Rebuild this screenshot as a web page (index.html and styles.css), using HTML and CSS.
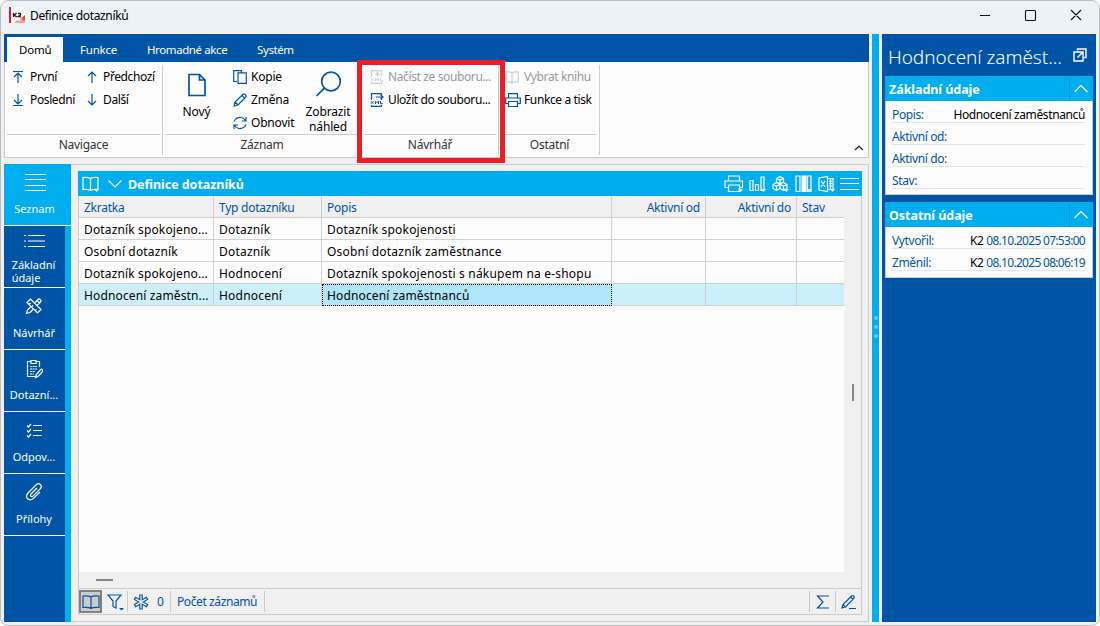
FILE: index.html
```html
<!DOCTYPE html>
<html lang="cs">
<head>
    <meta charset="UTF-8">
    <title>Definice dotazníků</title>
    <link rel="stylesheet" href="styles.css">
</head>
<body>
<div class="window">

    <header class="titlebar">
        <svg class="logo" width="16" height="16" viewBox="0 0 16 16">
            <rect width="16" height="16" fill="#fbfbfb"/>
            <path d="M16 9v7H5l3-3 3 1 1-4z" fill="#f3a39c"/>
            <path d="M16 8l-3 3 1 3 2-1z" fill="#e8493f"/>
            <rect width="2" height="16" fill="#d81e2c"/>
            <path d="M4.500 6v4M7.500 6L5.500 8l2 2M9 6.500h2.500V8L9 9.500h3" stroke="#222" stroke-width="1.300" fill="none"/>
        </svg>
        <span class="app-title">Definice dotazníků</span>
        <svg class="win-buttons" width="104" height="12" viewBox="0 0 104 12">
            <path d="M0 6.500h10M46.500 1.500h8q1 0 1 1v8q0 1-1 1h-8q-1 0-1-1v-8q0-1 1-1zM91 1l10 10M101 1L91 11" fill="none" stroke="#111" stroke-width="1.100"/>
        </svg>
    </header>

    <div class="workspace">
        <div class="left">
            <nav class="tabs">
                <span class="tab active">Domů</span>
                <span class="tab tab-funkce">Funkce</span>
                <span class="tab tab-hromadne">Hromadné akce</span>
                <span class="tab tab-system">Systém</span>
            </nav>

            <div class="ribbon">
                <section class="group navigace">
                    <div class="tools">
                        <div class="stack">
                            <span class="tool"><svg class="ico" viewBox="0 0 14 14"><path d="M1 1.500h10M6 13V3M2 7l4-4 4 4"/></svg>První</span>
                            <span class="tool"><svg class="ico" viewBox="0 0 14 14"><path d="M1 12.500h10M6 1v10M2 7l4 4 4-4"/></svg>Poslední</span>
                        </div>
                        <div class="stack">
                            <span class="tool"><svg class="ico" viewBox="0 0 14 14"><path d="M7 13V2M3 6l4-4 4 4"/></svg>Předchozí</span>
                            <span class="tool"><svg class="ico" viewBox="0 0 14 14"><path d="M7 1v11M3 8l4 4 4-4"/></svg>Další</span>
                        </div>
                    </div>
                    <div class="group-name">Navigace</div>
                </section>

                <section class="group zaznam">
                    <div class="tools">
                        <span class="big-tool novy">
                            <svg width="18" height="24" viewBox="0 0 18 24"><path d="M1 1.500h10.500L17 7v15.500H1zM11.500 1.500V7H17" stroke-width="1.700"/></svg>
                            Nový
                        </span>
                        <div class="stack">
                            <span class="tool"><svg class="ico" viewBox="0 0 14 14"><path d="M4 11.500H.7V.7h7.800V3M5 2.900h8.300v10.500H5z"/></svg>Kopie</span>
                            <span class="tool"><svg class="ico" viewBox="0 0 14 14"><path d="M1 13l1-4L10 1.200q1-.8 2 .2l.6.6q1 1 .2 2L5 12zM2 9l3 3M9 2.500l2.700 2.700"/></svg>Změna</span>
                            <span class="tool"><svg class="ico" viewBox="0 0 14 14"><path d="M1 5.500Q3.500.9 8 1.500q2.500.3 4.500 3M13 1v4H9M13 8.500q-2.500 4.600-7 4Q3.500 12.200 1.500 9.500M1 13V9h4"/></svg>Obnovit</span>
                        </div>
                        <span class="big-tool nahled">
                            <svg width="28" height="28" viewBox="0 0 28 28"><circle cx="17" cy="11.500" r="9.300" stroke-width="1.700"/><path d="M10.300 18.200L2.500 26" stroke-width="1.700"/></svg>
                            <span>Zobrazit<br>náhled</span>
                        </span>
                    </div>
                    <div class="group-name">Záznam</div>
                </section>

                <section class="group navrhar">
                    <div class="tools">
                        <div class="stack">
                            <span class="tool disabled"><svg class="ico" viewBox="0 0 14 14"><path d="M1.500 7V.7h10v1.800M11.500 5.500V7M13 4H6M8.500 1.800L6 4l2.500 2.200M1.500 12v1.300h10V12"/><path d="M1 8.200l2.500 2.600M3.500 8.200L1 10.800M5.500 11V8.200L7 9.700l1.500-1.500V11M10.500 8v2.700H13" stroke-width="1"/></svg>Načíst ze souboru...</span>
                            <span class="tool"><svg class="ico" viewBox="0 0 14 14"><path d="M1.500 7V.7h10v1.300M11.500 6v1M6 4h7M10.500 1.800L13 4l-2.500 2.200M1.500 12v1.300h10V12"/><path d="M1 8.200l2.500 2.600M3.500 8.200L1 10.800M5.500 11V8.200L7 9.700l1.500-1.500V11M10.500 8v2.700H13" stroke-width="1"/></svg>Uložít do souboru...</span>
                        </div>
                    </div>
                    <div class="group-name">Návrhář</div>
                    <div class="highlight"></div>
                </section>

                <section class="group ostatni">
                    <div class="tools">
                        <div class="stack">
                            <span class="tool disabled"><svg class="ico" viewBox="0 0 14 14"><path d="M7 3Q5 1.500.7 2v10Q5 11.500 7 13q2-1.500 6.300-1V2Q9 1.500 7 3zv10"/></svg>Vybrat knihu</span>
                            <span class="tool"><svg class="ico print" viewBox="0 0 16 14"><path d="M3.500 5V.7h9V5M3.500 10.500H.7V5h14.600v5.500h-2.800M3.500 8.500h9v5h-9z"/></svg>Funkce a tisk</span>
                        </div>
                    </div>
                    <div class="group-name">Ostatní</div>
                </section>
                <svg class="collapse" width="10" height="6" viewBox="0 0 10 6"><path d="M1 5l4-4 4 4"/></svg>
            </div>

            <div class="content">
                <aside class="sidebar">
                    <a class="side-item active"><svg width="22" height="19" viewBox="0 0 22 19"><path d="M1 1.500h21M1 6.500h21M1 12.500h21M1 17.500h21"/></svg>Seznam</a>
                    <a class="side-item two-line"><svg width="22" height="14" viewBox="0 0 22 14"><path d="M5 1.500h17M5 7h17M5 12.500h17M1 1.500h2M1 7h2M1 12.500h2"/></svg><span>Základní<br>údaje</span></a>
                    <a class="side-item"><svg width="18" height="18" viewBox="0 0 18 18"><path d="M2 5.500L5.500 2 16 12.500 12.500 16zM4 7.500l1.500-1.500M6.500 10L8 8.500M10 14l1.500-1.500"/><path d="M10 5.500L13 2.500q1-1 2 0l.5.500q1 1 0 2L12 8.500M8 12.500L5 15.500l-3.500 1 1-3.500L6 9.500M12 3.500l2.500 2.500"/></svg>Návrhář</a>
                    <a class="side-item"><svg width="18" height="20" viewBox="0 0 18 20"><path d="M10 17.500H2.500v-15H6M11 2.500h3.500V8M6 1.500h5v3H6z"/><path d="M5 7.500h7M5 10h7M5 12.500h5M5 15h4" stroke-dasharray="2 .6"/><path d="M10.500 18.500l.8-3 4.500-5q.7-.7 1.400 0l.3.600q.7.7 0 1.400l-4.500 5z"/></svg>Dotazní...</a>
                    <a class="side-item"><svg width="18" height="20" viewBox="0 0 18 20"><path d="M8 4.500h9M8 9.500h9M8 14.500h9M2 4.500L3.500 6 6 3M2 9.500L3.500 11 6 8M2 14.500L3.500 16 6 13"/></svg>Odpov...</a>
                    <a class="side-item"><svg class="clip" width="18" height="20" viewBox="0 0 18 20"><path d="M12 6l-6 6q-1 1.300 0 2.200 1 .8 2.200-.3l7-7q2-2.300.3-4.300-2-1.800-4.300.2L3 11q-2.600 3-.4 5.800 2.700 2.200 5.800-.4L15 10"/></svg>Přílohy</a>
                </aside>

                <main class="panel">
                    <div class="browser">
                        <div class="browser-head">
                            <svg width="18" height="18" viewBox="0 0 18 18"><path d="M8.500 3.500Q6 2 1 2.500v12q5-.5 7.500 1 2.500-1.500 7.500-1v-12q-5-.5-7.500 1zv12"/><path class="drop" d="M12 14h5l-2.500 3z"/></svg>
                            <svg class="chev" width="14" height="8" viewBox="0 0 14 8"><path d="M.5.5L7 7 13.500.5"/></svg>
                            <b>Definice dotazníků</b>
                            <div class="head-tools">
                                <svg width="20" height="18" viewBox="0 0 20 18"><path d="M4.500 6V1h11v5M4.500 12.500H1V6h17.500v6.500h-3M4.500 10h11v6.500h-11z"/><path class="drop" d="M14 14h5l-2.500 3z"/></svg>
                                <svg width="18" height="18" viewBox="0 0 18 18"><path d="M1 5.500h3v10H1zM6.500 9.500h3v6h-3zM12 2h3v13.500h-3z"/><path class="drop" d="M12 14h5l-2.500 3z"/></svg>
                                <svg width="18" height="18" viewBox="0 0 18 18"><path d="M8 1.500l3.500 2v3.500L8 9 4.500 7V3.500zM4.500 3.500L8 5l3.500-1.500M8 5v4M4.500 7.500L8 9.500v4l-3.500 2-3.500-2v-4zM1 9.500l3.500 1.500L8 9.500l3.500 1.500L15 9.500M11.500 7.500l3.500 2v4l-3.500 2-3.500-2M4.500 11v4.500M11.500 11v4.500"/><path class="drop" d="M12 14h5l-2.500 3z"/></svg>
                                <svg width="18" height="18" viewBox="0 0 18 18"><path d="M1 1h4v15.500H1zM12.500 1h3.500v15.500h-3.500z"/><path class="drop" d="M6.500.5h5V17h-5zM12 14h5l-2.500 3z"/></svg>
                                <svg width="18" height="18" viewBox="0 0 18 18"><path d="M9.500 1.500v15L1 15V3zM9.500 3.500h5.500v11H9.500M3 6l4 6M7 6l-4 6M11 6h3M11 8.500h3M11 11h3M12.500 4v10"/><path class="drop" d="M12 14h5l-2.500 3z"/></svg>
                                <svg class="menu" width="24" height="22" viewBox="0 0 24 22"><path d="M.5 0v22" stroke="#0391d0"/><path d="M2 5.500h19M2 10.500h19M2 16.500h19"/></svg>
                            </div>
                        </div>

                        <div class="grid-area">
                            <table>
                                <thead>
                                    <tr><th class="c1">Zkratka</th><th class="c2">Typ dotazníku</th><th class="c3">Popis</th><th class="c4">Aktivní od</th><th class="c5">Aktivní do</th><th class="c6">Stav</th></tr>
                                </thead>
                                <tbody>
                                    <tr><td>Dotazník spokojeno...</td><td>Dotazník</td><td>Dotazník spokojenosti</td><td></td><td></td><td></td></tr>
                                    <tr><td>Osobní dotazník</td><td>Dotazník</td><td>Osobní dotazník zaměstnance</td><td></td><td></td><td></td></tr>
                                    <tr><td>Dotazník spokojeno...</td><td>Hodnocení</td><td>Dotazník spokojenosti s nákupem na e-shopu</td><td></td><td></td><td></td></tr>
                                    <tr class="selected"><td>Hodnocení zaměstn...</td><td>Hodnocení</td><td class="focused">Hodnocení zaměstnanců</td><td></td><td></td><td></td></tr>
                                </tbody>
                            </table>
                            <div class="vscroll"><i></i></div>
                        </div>
                        <div class="hscroll"><i></i></div>

                        <footer class="statusbar">
                            <span class="book"><svg width="18" height="16" viewBox="0 0 18 16"><path d="M9 3Q7 1.500 1 2v11.500q6-.5 8 1 2-1.500 8-1V2Q11 1.500 9 3zv11.500"/></svg></span>
                            <span class="filter"><svg width="18" height="18" viewBox="0 0 18 18"><path d="M1 2h13L9 8v7l-3-1.500V8z"/><path class="drop" d="M12 15h5l-2.500 2.500z"/></svg></span>
                            <span class="count"><svg width="16" height="16" viewBox="0 0 16 16"><path d="M8 .5v15M1.500 4l13 8M14.500 4l-13 8" stroke-width="3.600"/><path d="M8 1.500v13M2.500 4.600l11 6.800M13.500 4.600l-11 6.800" stroke="#f0f0f0" stroke-width="1.300"/></svg>0</span>
                            <span class="records">Počet záznamů</span>
                            <span class="sum"><svg width="14" height="14" viewBox="0 0 14 14"><path d="M13 1H1.500l5.500 6-5.500 6H13"/></svg></span>
                            <span class="edit"><svg width="16" height="16" viewBox="0 0 16 16"><path d="M1 14l1-3.500L10.500 2q1.200-1 2.300 0 1 1 0 2.300L4.500 13zM2 10.500L4.500 13M9.500 3L12 5.500M8 14.500h7"/></svg></span>
                        </footer>
                    </div>
                </main>
            </div>
        </div>

        <div class="splitter"><i></i><i></i><i></i></div>

        <aside class="preview">
            <div class="preview-title">
                <span>Hodnocení zaměst...</span>
                <svg width="14" height="14" viewBox="0 0 14 14"><path d="M4.500 2.500V1H13v8.500h-2M7 4H1v9h9V7.500M4.500 9.500l5-5M6.500 4h3.500v3.500" stroke-width="1.400"/></svg>
            </div>
            <section class="card">
                <h3>Základní údaje<svg width="24" height="21" viewBox="0 0 24 21"><path d="M.5 0v21" stroke="#0391d0"/><path d="M5.500 13l6.500-6.500 6.500 6.500"/></svg></h3>
                <dl>
                    <div><dt>Popis:</dt><dd>Hodnocení zaměstnanců</dd></div>
                    <div><dt>Aktivní od:</dt><dd></dd></div>
                    <div><dt>Aktivní do:</dt><dd></dd></div>
                    <div><dt>Stav:</dt><dd></dd></div>
                </dl>
            </section>
            <section class="card other">
                <h3>Ostatní údaje<svg width="24" height="21" viewBox="0 0 24 21"><path d="M.5 0v21" stroke="#0391d0"/><path d="M5.500 13l6.500-6.500 6.500 6.500"/></svg></h3>
                <dl>
                    <div><dt>Vytvořil:</dt><dd>K2 <span>08.10.2025 07:53:00</span></dd></div>
                    <div><dt>Změnil:</dt><dd>K2 <span>08.10.2025 08:06:19</span></dd></div>
                </dl>
            </section>
        </aside>
    </div>
</div>
</body>
</html>
```
FILE: styles.css
```css
* {
    box-sizing: border-box;
}

body {
    margin: 0;
    background: #fff;
    font: 12px/16px "Noto Sans", "Open Sans", sans-serif;
    color: #000;
    overflow: hidden;
}

svg {
    flex: none;
    fill: none;
    stroke: currentColor;
    stroke-width: 1.2;
}

.drop {
    fill: currentColor;
    stroke: none;
}

.window {
    height: 626px;
    background: #f0f0f0;
    border: 1px solid #bcbcbc;
    border-radius: 8px;
    overflow: hidden;
    padding: 0 3px 3px;
}

/* title bar */
.titlebar {
    height: 30px;
    margin: 0 -3px 3px;
    padding: 0 15px 2px 8px;
    display: flex;
    align-items: center;
    background: #ebf3f7;
}

.logo {
    stroke: none;
}

.app-title {
    margin-left: 5px;
    padding-top: 2px;
    letter-spacing: -0.35px;
}

.win-buttons {
    margin-left: auto;
}

.workspace {
    display: flex;
    height: 588px;
    gap: 3px;
}

.left {
    width: 865px;
    display: flex;
    flex-direction: column;
}

/* ribbon */
.tabs {
    height: 28px;
    padding: 3px 3px 0;
    display: flex;
    background: #0054a6;
    color: #fff;
}

.tab {
    height: 25px;
    line-height: 26px;
    padding-left: 17px;
    font-size: 11.5px;
    letter-spacing: -0.4px;
    white-space: nowrap;
}

.tab.active {
    width: 56px;
    padding-left: 12px;
    background: #fdfdfd;
    color: #000;
    letter-spacing: -0.2px;
}

.tab-funkce {
    width: 67px;
    letter-spacing: -0.2px;
}

.tab-hromadne {
    width: 110px;
}

.ribbon {
    height: 96px;
    display: flex;
    padding: 3px 0 2px 2px;
    background: #fdfdfd;
    border: 1px solid #ccc;
    border-top: none;
}

.group {
    position: relative;
    display: flex;
    flex-direction: column;
    border-right: 1px solid #ccc;
    padding: 0 2px 0 0;
}

.tools {
    height: 69px;
    display: flex;
}

.group-name {
    height: 21px;
    line-height: 20px;
    border-top: 1px solid #ccc;
    text-align: center;
    color: #333;
    letter-spacing: -0.25px;
}

.stack {
    display: flex;
    flex: none;
    flex-direction: column;
}

.tool {
    height: 23px;
    display: flex;
    align-items: center;
    gap: 4px;
    white-space: nowrap;
    letter-spacing: -0.38px;
}

.ico {
    width: 14px;
    height: 14px;
    color: #0054a6;
}

.print {
    width: 16px;
    margin-right: -2px;
}

.disabled,
.disabled .ico {
    color: #9a9a9a;
}

.disabled .ico {
    opacity: 0.45;
}

.navigace {
    width: 156px;
}

.navigace .stack {
    padding-left: 5px;
    width: 73px;
}

.zaznam {
    width: 197px;
    padding-left: 2px;
}

.zaznam .group-name {
    padding-left: 2px;
}

.zaznam .stack {
    width: 69px;
    padding-left: 5px;
}

.zaznam .tool {
    letter-spacing: -0.2px;
}

.big-tool {
    display: flex;
    flex: none;
    flex-direction: column;
    align-items: center;
    line-height: 15px;
    text-align: center;
    letter-spacing: -0.15px;
}

.big-tool svg {
    color: #0054a6;
}

.novy {
    width: 63px;
    padding-top: 8px;
    gap: 7px;
}

.nahled {
    width: 60px;
    margin-left: 1px;
    padding-top: 5px;
    gap: 6px;
}

.navrhar {
    width: 139px;
    padding-left: 4px;
}

.navrhar .stack {
    padding-left: 6px;
}

.highlight {
    position: absolute;
    left: -3px;
    top: -5px;
    width: 148px;
    height: 103px;
    border: 5px solid #ee1c25;
    z-index: 2;
}

.ostatni {
    width: 101px;
    padding-left: 3px;
}

.ostatni .stack {
    padding-left: 3px;
}

.ostatni .tool {
    gap: 5px;
}

.collapse {
    margin: auto 4px 4px auto;
    color: #222;
}

/* left menu */
.content {
    flex: 1;
    min-height: 0;
    padding-top: 6px;
    display: flex;
}

.sidebar {
    width: 67px;
    background: #0054a6;
    border-right: 6px solid #00aeef;
    color: #fff;
}

.side-item {
    height: 62px;
    padding: 9px 1px 8px 0;
    border-bottom: 1px solid #fff;
    display: flex;
    flex-direction: column;
    align-items: center;
    justify-content: space-between;
    font-size: 11px;
}

.side-item.active {
    margin-right: -6px;
    padding-right: 6px;
    background: #00aeef;
}

.clip {
    margin-top: -1px;
}

.two-line {
    line-height: 13px;
    padding: 8px 2px 3px 0;
}

/* record list */
.panel {
    flex: 1;
    padding: 6px 6px 6px 7px;
    border: 1px solid #ccc;
    border-left: none;
}

.browser {
    height: 100%;
    display: flex;
    flex-direction: column;
    border: 1px solid #ccc;
    border-top: none;
}

.browser-head {
    height: 25px;
    margin: 0 -1px;
    padding-left: 4px;
    display: flex;
    align-items: center;
    background: #00aeef;
    color: #fff;
    font-size: 12.5px;
}

.browser-head b {
    padding-top: 2px;
    letter-spacing: -0.05px;
}

.chev {
    margin: 0 6px 0 8px;
}

.head-tools {
    margin-left: auto;
    display: flex;
    align-items: center;
    gap: 5px;
}

.menu {
    margin-left: -3px;
}

.grid-area {
    flex: 1;
    display: flex;
    align-items: flex-start;
    background: linear-gradient(to right, #fdfdfd 765px, #f0f0f0 765px);
}

table {
    width: 765px;
    table-layout: fixed;
    border-collapse: separate;
    border-spacing: 0;
}

th,
td {
    height: 22px;
    padding: 3px 5px 0;
    border-right: 1px solid #d0d0d0;
    border-bottom: 1px solid #d0d0d0;
    font-weight: normal;
    text-align: left;
    white-space: nowrap;
    line-height: 18px;
}

td {
    letter-spacing: 0.2px;
}

th {
    background: #f0f0f0;
    color: #0054a6;
    letter-spacing: -0.25px;
}

td:first-child {
    letter-spacing: 0.14px;
}

th:last-child,
td:last-child {
    border-right: none;
}

.c1 {
    width: 135px;
}

.c2 {
    width: 108px;
}

.c3 {
    width: 290px;
}

.c4 {
    width: 94px;
}

.c5 {
    width: 91px;
}

.c4,
.c5 {
    text-align: right;
}

.selected td {
    background: #ccf0fb;
}

.selected .focused {
    background: #afe6fa;
    outline: 1px dotted #000;
    outline-offset: -1px;
    letter-spacing: 0.14px;
}

.vscroll {
    flex: 1;
    padding: 188px 0 0 8px;
}

.vscroll i {
    display: block;
    width: 2px;
    height: 17px;
    background: #868686;
}

.hscroll {
    height: 16px;
    padding: 7px 0 0 17px;
}

.hscroll i {
    display: block;
    width: 17px;
    height: 2px;
    background: #868686;
}

.statusbar {
    height: 26px;
    border-top: 1px solid #ccc;
    display: flex;
    align-items: center;
    color: #0054a6;
}

.statusbar span {
    height: 21px;
    display: flex;
    align-items: center;
    border-right: 1px solid #ccc;
}

.statusbar .book {
    width: 23px;
    height: 23px;
    justify-content: center;
    background: #ccc;
    border: 2px solid #808080;
}

.filter {
    width: 26px;
    padding-left: 5px;
}

.count {
    width: 43px;
    padding-left: 5px;
    gap: 8px;
}

.records {
    width: 94px;
    padding-left: 6px;
    letter-spacing: -0.4px;
}

.statusbar .sum {
    width: 27px;
    margin-left: auto;
    justify-content: center;
    border-left: 1px solid #ccc;
}

.statusbar .edit {
    width: 25px;
    justify-content: center;
    border: none;
}

/* splitter between list and preview */
.splitter {
    width: 7px;
    padding-top: 282px;
    display: flex;
    flex-direction: column;
    align-items: center;
    gap: 5px;
    background: #00aeef;
}

.splitter i {
    width: 4px;
    height: 4px;
    border-radius: 50%;
    background: #5ccdf6;
}

/* preview */
.preview {
    width: 214px;
    padding: 0 3px;
    background: #0054a6;
}

.preview-title {
    height: 42px;
    padding: 4px 6px 0 3px;
    display: flex;
    align-items: center;
    justify-content: space-between;
    color: #fff;
    font-size: 19px;
    font-weight: 300;
    letter-spacing: -0.05px;
    white-space: nowrap;
}

.preview-title svg {
    margin-bottom: 5px;
}

.card {
    margin-bottom: 7px;
}

.card h3 {
    height: 25px;
    margin: 0;
    padding: 2px 0 0 4px;
    display: flex;
    align-items: center;
    justify-content: space-between;
    background: #00aeef;
    color: #fff;
    font-size: 12.5px;
    letter-spacing: -0.05px;
}

.card dl {
    margin: 0;
    height: 94px;
    padding: 0 7px 0 6px;
    border: 1px solid #ccc;
    border-top: none;
    background: #fdfdfd;
}

.other dl {
    height: 51px;
}

.card dl div {
    height: 22px;
    padding-top: 6px;
    line-height: 15px;
    border-bottom: 1px solid #e6e6e6;
    display: flex;
    justify-content: space-between;
    letter-spacing: -0.38px;
}

dt,
dd span {
    color: #0054a6;
}

dd {
    margin: 0;
}

dd span {
    letter-spacing: -0.7px;
}
```
